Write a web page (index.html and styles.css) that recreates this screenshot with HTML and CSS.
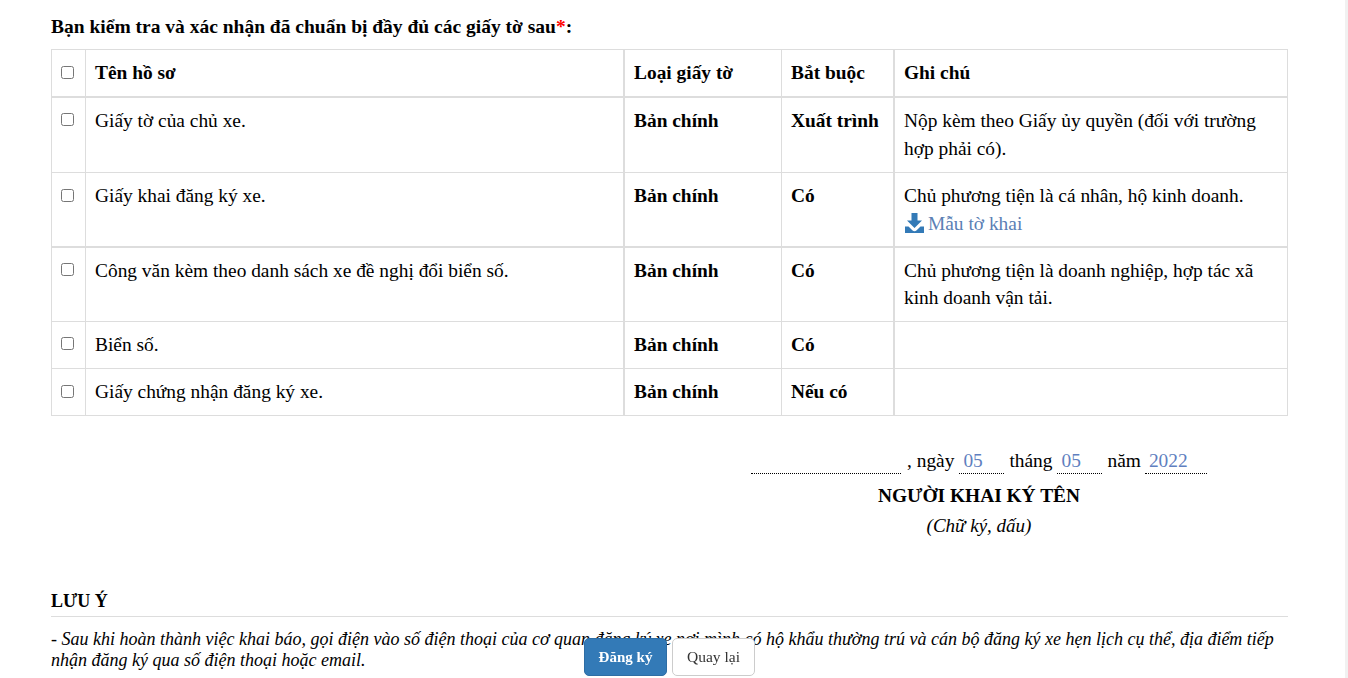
FILE: index.html
```html
<!DOCTYPE html>
<html lang="vi">
<head>
<meta charset="utf-8">
<title>Đăng ký xe</title>
<link rel="stylesheet" href="styles.css">
</head>
<body>
<main class="page">
  <p class="lead">Bạn kiểm tra và xác nhận đã chuẩn bị đầy đủ các giấy tờ sau<span class="req">*</span>:</p>
  <table class="docs">
    <colgroup><col class="c1"><col class="c2"><col class="c3"><col class="c4"><col class="c5"></colgroup>
    <thead>
      <tr class="thick-b h48">
        <th class="chk"><input type="checkbox"></th>
        <th class="no-r">Tên hồ sơ</th>
        <th class="thick-l">Loại giấy tờ</th>
        <th class="no-r">Bắt buộc</th>
        <th class="thick-l">Ghi chú</th>
      </tr>
    </thead>
    <tbody>
      <tr class="h75 loose">
        <td class="chk up"><input type="checkbox"></td>
        <td class="no-r">Giấy tờ của chủ xe.</td>
        <td class="thick-l"><b>Bản chính</b></td>
        <td class="no-r"><b>Xuất trình</b></td>
        <td class="thick-l">Nộp kèm theo Giấy ủy quyền (đối với trường hợp phải có).</td>
      </tr>
      <tr class="thick-b h75 loose">
        <td class="chk"><input type="checkbox"></td>
        <td class="no-r">Giấy khai đăng ký xe.</td>
        <td class="thick-l"><b>Bản chính</b></td>
        <td class="no-r"><b>Có</b></td>
        <td class="thick-l">Chủ phương tiện là cá nhân, hộ kinh doanh.<br>
          <a class="dl" href="#"><svg class="dl-icon" viewBox="0 0 19 20" aria-hidden="true"><path d="M6.500 0h6v7.500H17L9.500 15 2 7.500h4.500zM0 13.500h3.500l3.800 3.700a3.100 3.100 0 0 0 4.400 0l3.800-3.700H19V20H0z"/></svg>Mẫu tờ khai</a></td>
      </tr>
      <tr class="h74">
        <td class="chk up"><input type="checkbox"></td>
        <td class="no-r">Công văn kèm theo danh sách xe đề nghị đổi biển số.</td>
        <td class="thick-l"><b>Bản chính</b></td>
        <td class="no-r"><b>Có</b></td>
        <td class="thick-l">Chủ phương tiện là doanh nghiệp, hợp tác xã kinh doanh vận tải.</td>
      </tr>
      <tr class="h47">
        <td class="chk up"><input type="checkbox"></td>
        <td class="no-r">Biển số.</td>
        <td class="thick-l"><b>Bản chính</b></td>
        <td class="no-r"><b>Có</b></td>
        <td class="thick-l"></td>
      </tr>
      <tr class="h47">
        <td class="chk"><input type="checkbox"></td>
        <td class="no-r">Giấy chứng nhận đăng ký xe.</td>
        <td class="thick-l"><b>Bản chính</b></td>
        <td class="no-r"><b>Nếu có</b></td>
        <td class="thick-l"></td>
      </tr>
    </tbody>
  </table>

  <section class="sign">
    <div class="date">
      <span class="blank b-place"></span>
      <span>, ngày</span>
      <span class="blank b-short">05</span>
      <span>tháng</span>
      <span class="blank b-short">05</span>
      <span>năm</span>
      <span class="blank b-year">2022</span>
    </div>
    <div class="signer">NGƯỜI KHAI KÝ TÊN</div>
    <div class="sub">(Chữ ký, dấu)</div>
  </section>

  <section class="note">
    <h4 class="note-title">LƯU Ý</h4>
    <p class="note-text">- Sau khi hoàn thành việc khai báo, gọi điện vào số điện thoại của cơ quan đăng ký xe nơi mình có hộ khẩu thường trú và cán bộ đăng ký xe hẹn lịch cụ thể, địa điểm tiếp nhận đăng ký qua số điện thoại hoặc email.</p>
  </section>
</main>
<div class="actions">
  <button class="btn primary" type="button">Đăng ký</button>
  <button class="btn plain" type="button">Quay lại</button>
</div>
</body>
</html>
```
FILE: styles.css
```css
* { box-sizing: border-box; }
html, body { margin: 0; height: 100%; overflow: hidden; background: #fff; }
body {
  font-family: "Liberation Serif", "Times New Roman", serif;
  font-size: 19.4px;
  color: #000;
  border-right: 3px solid #f1f1f1;
}
.page { padding: 13px 57px 0 51px; }
.lead { margin: 0 0 9px; font-size: 19.5px; font-weight: 700; line-height: 27px; }
.req { color: #f00; }
.docs {
  width: 1237px;
  table-layout: fixed;
  border-collapse: separate;
  border-spacing: 0;
  border-top: 1px solid #ddd;
  border-left: 1px solid #ddd;
}
.c1 { width: 34px; }
.c2 { width: 537px; }
.c3 { width: 159px; }
.c4 { width: 111px; }
.c5 { width: 395px; }
.h48 { height: 48px; }
.h75 { height: 75px; }
.h74 { height: 74px; }
.h47 { height: 47px; }
th, td {
  border-right: 1px solid #ddd;
  border-bottom: 1px solid #ddd;
  padding: 9px 9px 0;
  line-height: 27px;
  text-align: left;
  vertical-align: top;
  font-weight: 400;
}
.loose > td { padding-top: 9px; line-height: 28px; }
th { font-weight: 700; }
.docs .chk { padding: 9px 3px 0 0; line-height: 27px; text-align: center; }
.docs .chk.up { padding-top: 8px; }
.chk input { width: 13px; height: 13px; margin: 5px 0 0; display: inline-block; }
.no-r { border-right: 0; }
.thick-l { border-left: 2px solid #ddd; }
.thick-b > * { border-bottom-width: 2px; }
.dl { color: #5b7fb5; text-decoration: none; }
.dl-icon { width: 19px; height: 20px; fill: #337ab7; vertical-align: -3px; margin: 0 4px 0 1px; }
.sign { margin-left: 700px; width: 456px; padding-top: 30px; text-align: center; }
.date { display: flex; align-items: flex-start; gap: 5px; height: 28px; padding-top: 1px; line-height: 27px; }
.blank { display: block; height: 27px; border-bottom: 1px dotted #000; color: #5f7fc0; text-align: left; }
.b-place { width: 150px; margin-right: 1px; }
.b-short { width: 45px; padding-left: 4px; }
.b-year { width: 62px; padding-left: 4px; margin-left: -1px; }
.signer { font-weight: 700; margin-top: 8px; line-height: 27px; }
.sub { font-style: italic; font-size: 19px; margin-top: 3px; line-height: 27px; }
.note { margin-top: 50px; }
.note-title { margin: 0; font-size: 18px; font-weight: 700; line-height: 24px; padding-bottom: 3px; border-bottom: 1px solid #ddd; }
.note-text { margin: 12px 0 0; font-size: 18px; font-style: italic; line-height: 21px; }
.actions { position: fixed; left: 584px; bottom: 2px; display: flex; gap: 5px; }
.btn {
  width: 83px; height: 38px; border-radius: 5px; border: 1px solid #ccc;
  font-family: inherit; font-size: 15px; padding: 0;
}
.primary { background: #337ab7; border-color: #2e6da4; color: #fff; font-weight: 700; }
.plain { background: #fff; color: #333; font-size: 15.5px; }
```
